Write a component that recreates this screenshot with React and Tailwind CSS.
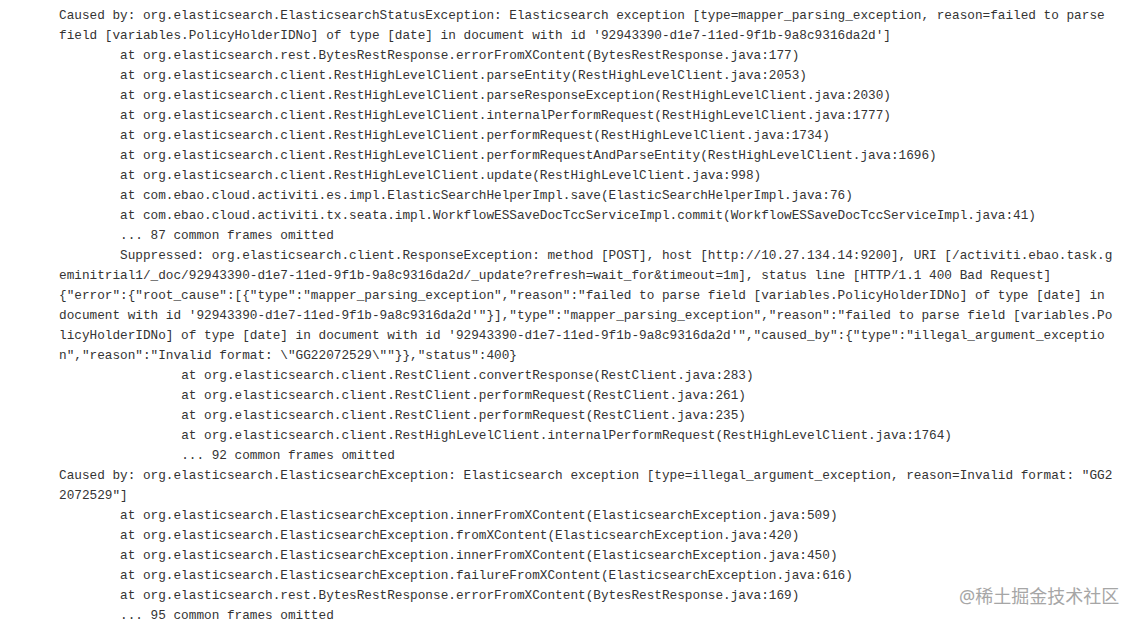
import React from 'react';

const lines = [
  'Caused by: org.elasticsearch.ElasticsearchStatusException: Elasticsearch exception [type=mapper_parsing_exception, reason=failed to parse',
  "field [variables.PolicyHolderIDNo] of type [date] in document with id '92943390-d1e7-11ed-9f1b-9a8c9316da2d']",
  '\tat org.elasticsearch.rest.BytesRestResponse.errorFromXContent(BytesRestResponse.java:177)',
  '\tat org.elasticsearch.client.RestHighLevelClient.parseEntity(RestHighLevelClient.java:2053)',
  '\tat org.elasticsearch.client.RestHighLevelClient.parseResponseException(RestHighLevelClient.java:2030)',
  '\tat org.elasticsearch.client.RestHighLevelClient.internalPerformRequest(RestHighLevelClient.java:1777)',
  '\tat org.elasticsearch.client.RestHighLevelClient.performRequest(RestHighLevelClient.java:1734)',
  '\tat org.elasticsearch.client.RestHighLevelClient.performRequestAndParseEntity(RestHighLevelClient.java:1696)',
  '\tat org.elasticsearch.client.RestHighLevelClient.update(RestHighLevelClient.java:998)',
  '\tat com.ebao.cloud.activiti.es.impl.ElasticSearchHelperImpl.save(ElasticSearchHelperImpl.java:76)',
  '\tat com.ebao.cloud.activiti.tx.seata.impl.WorkflowESSaveDocTccServiceImpl.commit(WorkflowESSaveDocTccServiceImpl.java:41)',
  '\t... 87 common frames omitted',
  '\tSuppressed: org.elasticsearch.client.ResponseException: method [POST], host [http://10.27.134.14:9200], URI [/activiti.ebao.task.g',
  'eminitrial1/_doc/92943390-d1e7-11ed-9f1b-9a8c9316da2d/_update?refresh=wait_for&timeout=1m], status line [HTTP/1.1 400 Bad Request]',
  '{"error":{"root_cause":[{"type":"mapper_parsing_exception","reason":"failed to parse field [variables.PolicyHolderIDNo] of type [date] in',
  'document with id \'92943390-d1e7-11ed-9f1b-9a8c9316da2d\'"}],"type":"mapper_parsing_exception","reason":"failed to parse field [variables.Po',
  'licyHolderIDNo] of type [date] in document with id \'92943390-d1e7-11ed-9f1b-9a8c9316da2d\'","caused_by":{"type":"illegal_argument_exceptio',
  'n","reason":"Invalid format: \\"GG22072529\\""}},"status":400}',
  '\t\tat org.elasticsearch.client.RestClient.convertResponse(RestClient.java:283)',
  '\t\tat org.elasticsearch.client.RestClient.performRequest(RestClient.java:261)',
  '\t\tat org.elasticsearch.client.RestClient.performRequest(RestClient.java:235)',
  '\t\tat org.elasticsearch.client.RestHighLevelClient.internalPerformRequest(RestHighLevelClient.java:1764)',
  '\t\t... 92 common frames omitted',
  'Caused by: org.elasticsearch.ElasticsearchException: Elasticsearch exception [type=illegal_argument_exception, reason=Invalid format: "GG2',
  '2072529"]',
  '\tat org.elasticsearch.ElasticsearchException.innerFromXContent(ElasticsearchException.java:509)',
  '\tat org.elasticsearch.ElasticsearchException.fromXContent(ElasticsearchException.java:420)',
  '\tat org.elasticsearch.ElasticsearchException.innerFromXContent(ElasticsearchException.java:450)',
  '\tat org.elasticsearch.ElasticsearchException.failureFromXContent(ElasticsearchException.java:616)',
  '\tat org.elasticsearch.rest.BytesRestResponse.errorFromXContent(BytesRestResponse.java:169)',
  '\t... 95 common frames omitted',
];

export default function App() {
  return (
    <div className="relative w-[1139px] h-[626px] overflow-hidden bg-white">
      <pre className="pl-[59px] pt-[6px] text-[12.72px] leading-[20px] text-[#333333] font-['Liberation_Mono','DejaVu_Sans_Mono',monospace] [tab-size:8]">
        {lines.map((line, i) => (
          <div key={i} className="whitespace-pre h-[20px]">{line}</div>
        ))}
      </pre>
      <div className="absolute top-[586px] left-[959px] text-[18px] leading-[20px] text-[#a6a6a6] font-['Noto_Sans','Noto_Sans_CJK_SC',sans-serif] whitespace-nowrap">
        @稀土掘金技术社区
      </div>
    </div>
  );
}
